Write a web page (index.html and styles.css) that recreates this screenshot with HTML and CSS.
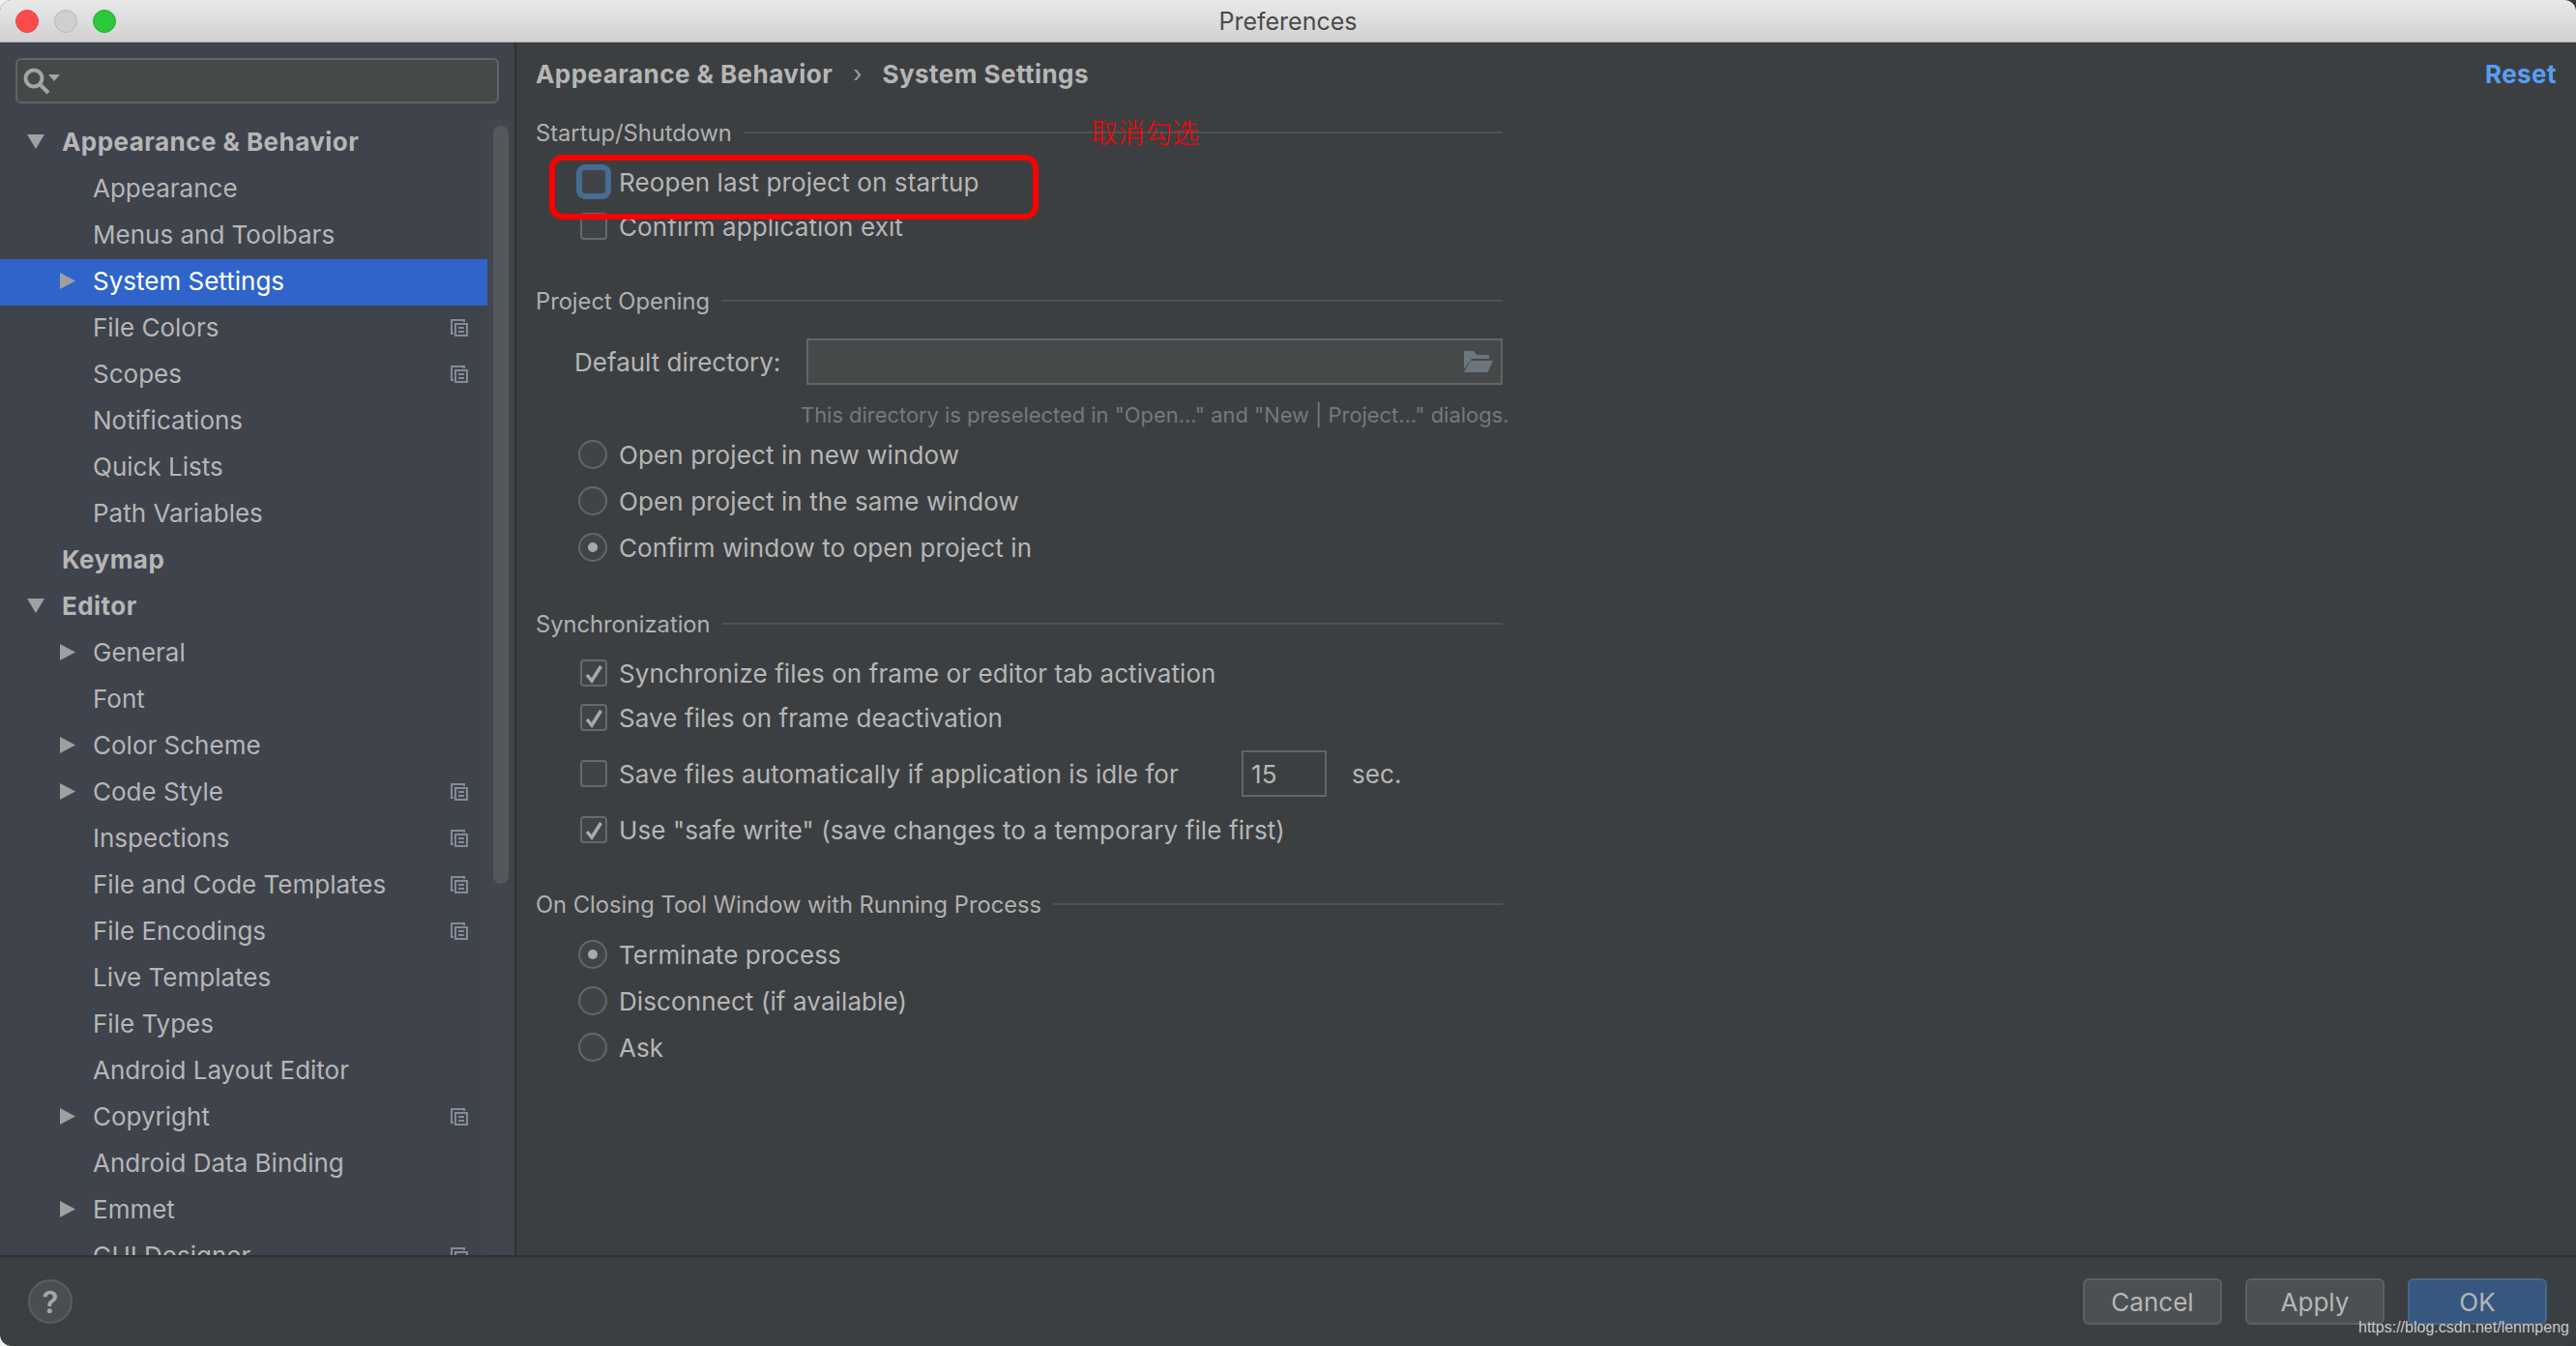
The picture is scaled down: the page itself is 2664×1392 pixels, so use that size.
FILE: index.html
```html
<!DOCTYPE html>
<html lang="en">
<head>
<meta charset="utf-8">
<title>Preferences</title>
<link rel="stylesheet" href="styles.css">
</head>
<body>
<svg class="sprites" width="0" height="0" aria-hidden="true">
  <symbol id="copy" viewBox="0 0 18 18">
    <path d="M3 15H1V1h13v2" fill="none" stroke="currentColor" stroke-width="2"/>
    <rect x="5" y="5" width="12" height="12" fill="none" stroke="currentColor" stroke-width="2"/>
    <path d="M8 9h6M8 13h6" stroke="currentColor" stroke-width="2"/>
  </symbol>
  <symbol id="tick" viewBox="0 0 28 28">
    <path d="M7 16l5 6L21.500 7" fill="none" stroke="currentColor" stroke-width="3.500"/>
  </symbol>
</svg>
<div class="window">
  <header class="titlebar">
    <div class="lights">
      <span class="light light-red"></span>
      <span class="light light-grey"></span>
      <span class="light light-green"></span>
    </div>
    <div class="title">Preferences</div>
  </header>

  <div class="content">
    <aside class="sidebar">
      <div class="search-wrap">
        <div class="search">
          <svg class="search-icon" width="48" height="40" viewBox="0 0 48 40">
            <circle cx="17" cy="19" r="8.500" fill="none" stroke="#a3a5a6" stroke-width="4"/>
            <path d="M23 25l9 9" stroke="#a3a5a6" stroke-width="4"/>
            <path d="M32 15h12l-6 7z" fill="#a3a5a6"/>
          </svg>
        </div>
      </div>
      <div class="tree-area">
        <div class="tree">
          <div class="node top"><span class="caret caret-down"></span><span class="strong">Appearance &amp; Behavior</span></div>
          <div class="node"><span class="slot"></span>Appearance</div>
          <div class="node"><span class="slot"></span>Menus and Toolbars</div>
          <div class="node selected"><span class="slot"><span class="caret caret-right"></span></span>System Settings</div>
          <div class="node"><span class="slot"></span>File Colors<svg class="copy"><use href="#copy"/></svg></div>
          <div class="node"><span class="slot"></span>Scopes<svg class="copy"><use href="#copy"/></svg></div>
          <div class="node"><span class="slot"></span>Notifications</div>
          <div class="node"><span class="slot"></span>Quick Lists</div>
          <div class="node"><span class="slot"></span>Path Variables</div>
          <div class="node top"><span class="caret caret-none"></span><span class="strong">Keymap</span></div>
          <div class="node top"><span class="caret caret-down"></span><span class="strong">Editor</span></div>
          <div class="node"><span class="slot"><span class="caret caret-right"></span></span>General</div>
          <div class="node"><span class="slot"></span>Font</div>
          <div class="node"><span class="slot"><span class="caret caret-right"></span></span>Color Scheme</div>
          <div class="node"><span class="slot"><span class="caret caret-right"></span></span>Code Style<svg class="copy"><use href="#copy"/></svg></div>
          <div class="node"><span class="slot"></span>Inspections<svg class="copy"><use href="#copy"/></svg></div>
          <div class="node"><span class="slot"></span>File and Code Templates<svg class="copy"><use href="#copy"/></svg></div>
          <div class="node"><span class="slot"></span>File Encodings<svg class="copy"><use href="#copy"/></svg></div>
          <div class="node"><span class="slot"></span>Live Templates</div>
          <div class="node"><span class="slot"></span>File Types</div>
          <div class="node"><span class="slot"></span>Android Layout Editor</div>
          <div class="node"><span class="slot"><span class="caret caret-right"></span></span>Copyright<svg class="copy"><use href="#copy"/></svg></div>
          <div class="node"><span class="slot"></span>Android Data Binding</div>
          <div class="node"><span class="slot"><span class="caret caret-right"></span></span>Emmet</div>
          <div class="node"><span class="slot"></span>GUI Designer<svg class="copy"><use href="#copy"/></svg></div>
        </div>
        <div class="scroll-track"><div class="scroll-thumb"></div></div>
      </div>
    </aside>

    <main class="main">
      <div class="crumbs">
        <span class="strong">Appearance &amp; Behavior</span>
        <span class="crumb-sep">›</span>
        <span class="strong">System Settings</span>
        <span class="reset">Reset</span>
      </div>

      <div class="settings">
        <section class="group group-startup">
          <h2 class="group-title"><span>Startup/Shutdown</span></h2>
          <div class="opt opt-first"><span class="box box-focus"></span>Reopen last project on startup</div>
          <div class="opt opt-second"><span class="box"></span>Confirm application exit</div>
        </section>

        <section class="group group-gap40">
          <h2 class="group-title"><span>Project Opening</span></h2>
          <div class="dir-row">
            <label class="dir-label">Default directory:</label>
            <div class="dir-input">
              <svg class="folder" width="30" height="22" viewBox="0 0 30 22">
                <path d="M0 0h10l3.500 4H26v4H8L0 19z" fill="#6b767d"/>
                <path d="M7 10h23l-5.500 12H0z" fill="#6b767d"/>
              </svg>
            </div>
          </div>
          <div class="hint">This directory is preselected in "Open..." and "New | Project..." dialogs.</div>
          <div class="radios radios-project">
            <div class="opt"><span class="radio"></span>Open project in new window</div>
            <div class="opt"><span class="radio"></span>Open project in the same window</div>
            <div class="opt"><span class="radio radio-on"></span>Confirm window to open project in</div>
          </div>
        </section>

        <section class="group group-gap40">
          <h2 class="group-title"><span>Synchronization</span></h2>
          <div class="opt opt-sync opt-sync-first"><span class="box"><svg class="tick"><use href="#tick"/></svg></span>Synchronize files on frame or editor tab activation</div>
          <div class="opt opt-sync"><span class="box"><svg class="tick"><use href="#tick"/></svg></span>Save files on frame deactivation</div>
          <div class="opt opt-idle"><span class="box"></span><span class="idle-label">Save files automatically if application is idle for</span><span class="num-input">15</span><span class="unit">sec.</span></div>
          <div class="opt opt-safe"><span class="box"><svg class="tick"><use href="#tick"/></svg></span>Use "safe write" (save changes to a temporary file first)</div>
        </section>

        <section class="group group-gap38">
          <h2 class="group-title"><span>On Closing Tool Window with Running Process</span></h2>
          <div class="radios radios-closing">
            <div class="opt"><span class="radio radio-on"></span>Terminate process</div>
            <div class="opt"><span class="radio"></span>Disconnect (if available)</div>
            <div class="opt"><span class="radio"></span>Ask</div>
          </div>
        </section>
      </div>
    </main>
  </div>

  <footer class="footer">
    <div class="help">?</div>
    <div class="buttons">
      <button class="btn">Cancel</button>
      <button class="btn">Apply</button>
      <button class="btn btn-ok">OK</button>
    </div>
  </footer>

  <div class="mark-box"></div>
  <div class="mark-text">取消勾选</div>
  <div class="watermark">https://blog.csdn.net/lenmpeng</div>
</div>
</body>
</html>
```

FILE: styles.css
```css
* { box-sizing: border-box; }

html, body {
  margin: 0;
  width: 2664px;
  height: 1392px;
  overflow: hidden;
}

body {
  background: linear-gradient(to right, #f0f0f0 50%, #3a3a3a 50%);
  font-family: Inter, "Liberation Sans", sans-serif;
  font-size: 26px;
  color: #b6b6b6;
}

.sprites { position: absolute; }

.window {
  position: relative;
  width: 2664px;
  height: 1392px;
  display: flex;
  flex-direction: column;
  border-radius: 12px;
  overflow: hidden;
  background: #3c3f41;
}

/* title bar */
.titlebar {
  height: 44px;
  flex: none;
  display: grid;
  grid-template-columns: 1fr auto 1fr;
  align-items: center;
  background: linear-gradient(#e9e9e9, #d1d1d1);
  border-bottom: 1px solid #a9a9a9;
}
.lights {
  display: flex;
  gap: 16px;
  padding-left: 16px;
}
.light {
  width: 24px;
  height: 24px;
  border-radius: 50%;
  border: 1px solid transparent;
}
.light-red { background: #fc4b4b; border-color: #df4744; }
.light-grey { background: #cfcfcf; border-color: #b6b6b6; }
.light-green { background: #2bc93a; border-color: #24a92f; }
.title {
  grid-column: 2;
  font-size: 25px;
  color: #4a4a4a;
}

.content {
  flex: 1;
  min-height: 0;
  display: flex;
}

/* sidebar */
.sidebar {
  width: 534px;
  flex: none;
  display: flex;
  flex-direction: column;
  background: #3f434c;
  border-right: 2px solid #2f3133;
}
.search-wrap {
  height: 80px;
  flex: none;
  padding: 16px 16px 0;
}
.search {
  width: 500px;
  height: 47px;
  background: #45494a;
  border: 2px solid #626465;
  border-radius: 6px;
}
.search-icon { display: block; }

.tree-area {
  flex: 1;
  min-height: 0;
  display: flex;
}
.tree {
  width: 504px;
  flex: none;
  overflow: hidden;
}
.node {
  height: 48px;
  display: flex;
  align-items: center;
  padding-left: 62px;
  padding-right: 20px;
  padding-bottom: 3px;
  white-space: nowrap;
}
.node.top { padding-left: 28px; }
.node.selected { background: #2f65ca; color: #fff; }
.slot {
  width: 34px;
  flex: none;
  display: flex;
  align-items: center;
}
.caret {
  display: block;
  flex: none;
  background: #a0a0a0;
}
.caret-down {
  width: 18px;
  height: 15px;
  margin-right: 18px;
  clip-path: polygon(0 0, 100% 0, 50% 100%);
}
.caret-none {
  width: 18px;
  height: 15px;
  margin-right: 18px;
  background: none;
}
.caret-right {
  width: 16px;
  height: 17px;
  clip-path: polygon(0 0, 100% 50%, 0 100%);
}
.strong { font-weight: 700; letter-spacing: 0.45px; }
.copy {
  width: 18px;
  height: 18px;
  margin-left: auto;
  color: #838c94;
}

.scroll-track {
  flex: 1;
  padding: 6px 6px 0;
  background: #41454e;
}
.scroll-thumb {
  height: 784px;
  border-radius: 8px;
  background: #54585b;
}

/* main */
.main {
  flex: 1;
  min-width: 0;
  padding-left: 20px;
  padding-right: 20px;
}
.crumbs {
  height: 64px;
  display: flex;
  align-items: center;
}
.crumb-sep { margin: 0 21px; color: #a0a0a0; font-size: 24px; }
.reset {
  margin-left: auto;
  font-weight: 700;
  letter-spacing: 0.45px;
  color: #589df6;
}

.settings { width: 1000px; }
.group-startup { margin-top: 14px; }
.group-gap40 { margin-top: 40px; }
.group-gap38 { margin-top: 38px; }

.group-title {
  height: 30px;
  margin: 0;
  display: flex;
  align-items: center;
  gap: 12px;
  font-size: 23.700px;
  font-weight: 400;
  color: #b0b0b0;
}
.group-title::after {
  content: "";
  flex: 1;
  height: 2px;
  background: #515151;
}

.opt {
  display: flex;
  align-items: center;
  height: 48px;
  padding-left: 46px;
  letter-spacing: 0.1px;
  white-space: nowrap;
}
.opt-first { height: 44px; margin-top: 14px; }
.opt-second { height: 44px; margin-top: 2px; }
.opt-sync { height: 46px; }
.opt-sync-first { margin-top: 13px; }
.opt-idle { margin-top: 11px; }
.opt-safe { margin-top: 10px; }

.box {
  width: 28px;
  height: 28px;
  flex: none;
  margin-right: 12px;
  display: flex;
  border: 2px solid #686868;
  border-radius: 4px;
  background: #404447;
  color: #a9a9a9;
}
.box-focus {
  border-color: #466c92;
  border-radius: 5px;
  box-shadow: 0 0 0 4px #466c92;
}
.tick {
  width: 28px;
  height: 28px;
  margin: -2px;
}

.radios-project { margin-top: 2px; }
.radios-closing { margin-top: 13px; }
.radios .opt { padding-left: 44px; }
.radio {
  width: 30px;
  height: 30px;
  flex: none;
  margin-right: 12px;
  display: flex;
  align-items: center;
  justify-content: center;
  border: 2px solid #666;
  border-radius: 50%;
  background: #404447;
}
.radio-on::after {
  content: "";
  width: 10px;
  height: 10px;
  border-radius: 50%;
  background: #a9a9a9;
}

.dir-row {
  margin-top: 24px;
  height: 48px;
  display: flex;
  align-items: center;
  padding-left: 40px;
}
.dir-label { width: 240px; flex: none; }
.dir-input {
  flex: 1;
  height: 48px;
  display: flex;
  align-items: center;
  justify-content: flex-end;
  padding-right: 8px;
  background: #45494a;
  border: 2px solid #646464;
}
.hint {
  margin-top: 16px;
  height: 30px;
  line-height: 30px;
  padding-left: 274px;
  font-size: 21.900px;
  color: #787878;
  white-space: nowrap;
}

.idle-label { width: 644px; flex: none; }
.num-input {
  width: 88px;
  height: 48px;
  flex: none;
  display: flex;
  align-items: center;
  padding-left: 8px;
  border: 2px solid #646464;
}
.unit { margin-left: 26px; }

/* footer */
.footer {
  height: 94px;
  flex: none;
  display: flex;
  align-items: center;
  justify-content: space-between;
  padding: 0 30px 0 29px;
  border-top: 2px solid #2f3133;
}
.help {
  width: 46px;
  height: 46px;
  display: flex;
  align-items: center;
  justify-content: center;
  border: 2px solid #5b5e60;
  border-radius: 50%;
  background: #4a4e50;
  font-size: 31px;
  font-weight: 600;
  color: #a6a6a6;
}
.buttons {
  display: flex;
  gap: 24px;
}
.btn {
  width: 144px;
  height: 48px;
  border: 2px solid #5e6060;
  border-radius: 6px;
  background: #4c5052;
  font: inherit;
  color: #b6b6b6;
}
.btn-ok {
  background: #365880;
  border-color: #43688c;
}

/* annotations on top of the screenshot */
.mark-box {
  position: absolute;
  left: 568px;
  top: 160px;
  width: 506px;
  height: 67px;
  border: 6px solid #fe0000;
  border-radius: 14px;
}
.mark-text {
  position: absolute;
  left: 1128px;
  top: 116px;
  font-family: "Noto Sans CJK SC", sans-serif;
  font-size: 28px;
  line-height: 40px;
  font-weight: 300;
  color: #f00;
}
.watermark {
  position: absolute;
  left: 2439px;
  top: 1363px;
  font-family: "Liberation Sans", sans-serif;
  font-size: 16px;
  line-height: 20px;
  color: #c9c9c9;
}
```
